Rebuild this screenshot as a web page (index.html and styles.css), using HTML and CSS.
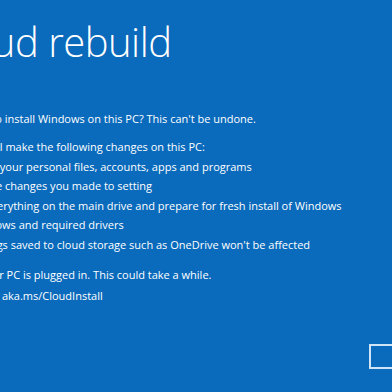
FILE: index.html
```html
<!DOCTYPE html>
<html lang="en">
<head>
<meta charset="utf-8">
<title>Cloud rebuild</title>
<link rel="stylesheet" href="styles.css">
</head>
<body>
<main class="screen">
  <h1 class="title">Cloud rebuild</h1>
  <p class="lead">Do you want to install Windows on this PC? This can't be undone.</p>
  <p class="intro">Reinstalling will make the following changes on this PC:</p>
  <ul class="changes">
    <li>Remove all your personal files, accounts, apps and programs</li>
    <li>Remove the changes you made to setting</li>
    <li>Remove everything on the main drive and prepare for fresh install of Windows</li>
    <li>Load Windows and required drivers</li>
    <li>Your settings saved to cloud storage such as OneDrive won't be affected</li>
  </ul>
  <p class="note">Make sure your PC is plugged in. This could take a while.</p>
  <p class="link">To learn more: aka.ms/CloudInstall</p>
</main>
<footer class="actions">
  <button class="btn" type="button">Reinstall</button>
</footer>
</body>
</html>
```

FILE: styles.css
```css
html, body {
  margin: 0;
  padding: 0;
}
body {
  width: 392px;
  height: 392px;
  overflow: hidden;
  background: #0a6abb;
  color: #ffffff;
  font-family: "Open Sans", "Liberation Sans", sans-serif;
}
.screen {
  width: 620px;
  margin-left: -76px;
  padding-top: 15px;
}
.title {
  margin: 0 0 0 12px;
  font-size: 40px;
  font-weight: 300;
  letter-spacing: -0.5px;
  line-height: 54px;
  white-space: nowrap;
}
.lead, .intro, .note, .link, .changes li {
  font-size: 11px;
  line-height: 19.5px;
  white-space: nowrap;
}
.lead {
  margin: 40px 0 0;
}
.intro {
  margin: 8.5px 0 0;
}
.changes {
  list-style: none;
  margin: 0;
  padding: 0 0 0 17px;
}
.note {
  margin: 11px 0 0;
}
.link {
  margin: 1.5px 0 0;
}
.actions {
  display: flex;
  justify-content: flex-end;
  margin-top: 38px;
}
.btn {
  width: 70px;
  height: 25px;
  margin-right: -47px;
  background: transparent;
  border: 2px solid #cfe4f6;
  color: #ffffff;
  font: 11px "Open Sans", "Liberation Sans", sans-serif;
  text-align: left;
  padding: 0 0 0 40px;
}
```
